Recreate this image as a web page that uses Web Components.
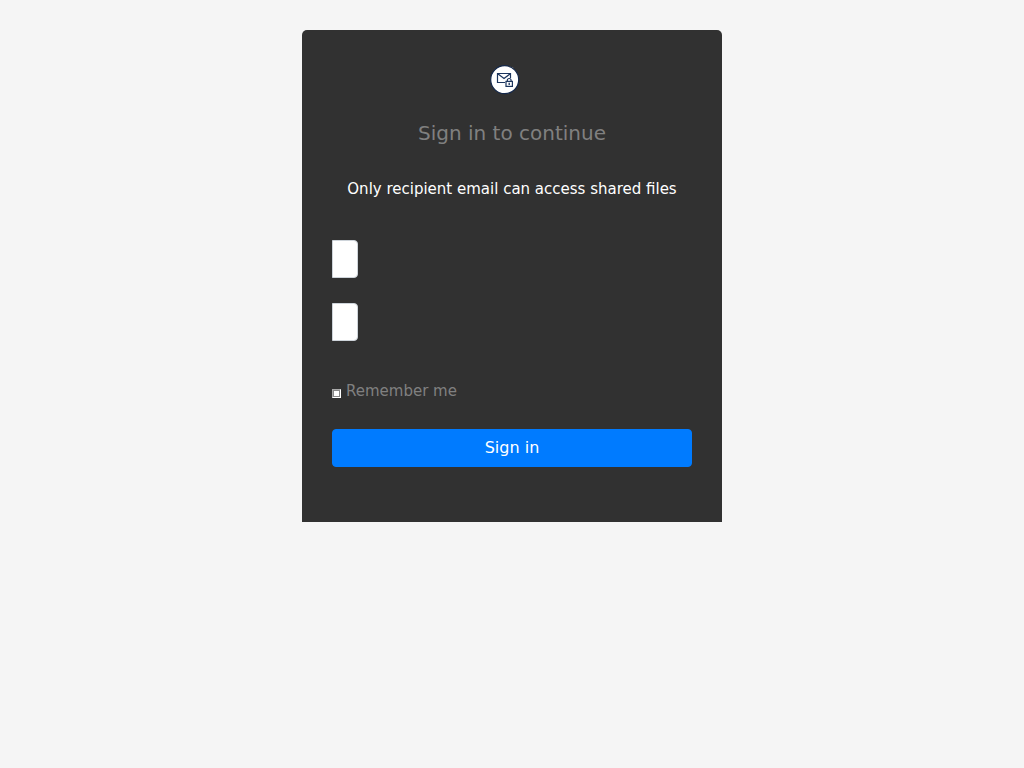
<!DOCTYPE html>
<html lang="en">
<head>
<meta charset="utf-8">
<meta name="viewport" content="width=device-width, initial-scale=1">
<title>Sign in</title>
<style>
body { margin: 0; background: #f5f5f5; font: 15px/24px "DejaVu Sans", sans-serif; color: #fff; }
</style>
</head>
<body>
<sign-in-card>
  <mail-logo slot="logo"></mail-logo>
  <span slot="heading">Sign in to continue</span>
  <span slot="note">Only recipient email can access shared files</span>
  <text-field type="email" label="Email"></text-field>
  <text-field type="password" label="Password"></text-field>
  <remember-option slot="actions">Remember me</remember-option>
  <submit-button slot="actions">Sign in</submit-button>
</sign-in-card>
<script>
function define(name, markup) {
  customElements.define(name, class extends HTMLElement {
    constructor() {
      super();
      this.attachShadow({ mode: 'open' }).innerHTML = markup;
    }
  });
}

define('mail-logo', `
  <style>
    :host { display: block; width: 30px; height: 30px; }
    svg { display: block; width: 100%; height: 100%; }
  </style>
  <svg viewBox="0 0 30 30" fill="none" role="img" aria-label="Secure mail">
    <circle cx="14.7" cy="14.7" r="14" fill="#fff" stroke="#14284b" stroke-width="1.2"/>
    <path d="M15 17.5H7.5V8.5H20.5V13M7.8 8.8L14 13.4L20.2 8.8" stroke="#1c355e" stroke-width="1.2"/>
    <path d="M17.3 16.3V15.4a1.9 1.9 0 0 1 3.8 0V16.3" stroke="#1c355e" stroke-width="1.2"/>
    <rect x="16" y="16.4" width="6.4" height="5" fill="#fff" stroke="#1c355e" stroke-width="1.2"/>
    <path d="M19.2 17.7v2.4" stroke="#1c355e" stroke-width="1.3"/>
  </svg>`);

define('remember-option', `
  <style>
    :host { display: block; color: #808080; }
    label { display: flex; align-items: center; gap: 5px; }
    input {
      appearance: none; box-sizing: border-box; width: 9px; height: 9px;
      margin: 5px 0 0; background: #fff; border: 1px solid;
      border-color: #aaa #fff #fff #aaa; box-shadow: inset 0 0 0 1px #888;
    }
    input:checked { background: #007bff; }
  </style>
  <label><input type="checkbox"><span><slot></slot></span></label>`);

define('submit-button', `
  <style>
    :host { display: block; }
    button {
      display: block; width: 100%; padding: 6px 12px; border: 1px solid #007bff;
      border-radius: 4px; background: #007bff; color: #fff; font: inherit; font-size: 16px;
    }
  </style>
  <button type="button"><slot></slot></button>`);

customElements.define('text-field', class extends HTMLElement {
  constructor() {
    super();
    this.attachShadow({ mode: 'open' }).innerHTML = `
      <style>
        :host { display: block; }
        input {
          display: block; box-sizing: border-box; width: 26px; height: 38px;
          padding: 6px 12px; border: 1px solid #ced4da; border-radius: 0 4px 4px 0;
          background: #fff; color: #495057; font: inherit;
        }
      </style>
      <input>`;
  }
  connectedCallback() {
    const input = this.shadowRoot.querySelector('input');
    input.type = this.getAttribute('type');
    input.setAttribute('aria-label', this.getAttribute('label'));
  }
});

define('sign-in-card', `
  <style>
    :host {
      display: block; box-sizing: border-box; max-width: 420px; margin: 30px auto;
      padding: 35px 30px 55px; border-radius: 5px 5px 0 0; background: #313131;
    }
    header { display: flex; flex-direction: column; align-items: center; text-align: center; }
    .logo { padding-right: 15px; }
    h1 { margin: 26px 0 32px; font-size: 20px; line-height: 24px; font-weight: 400; color: #808080; }
    p { margin: 0 0 39px; }
    .fields { display: grid; gap: 25px; margin-bottom: 38px; }
    .actions { display: grid; gap: 26px; }
  </style>
  <header>
    <div class="logo"><slot name="logo"></slot></div>
    <h1><slot name="heading"></slot></h1>
    <p><slot name="note"></slot></p>
  </header>
  <div class="fields"><slot></slot></div>
  <div class="actions"><slot name="actions"></slot></div>`);
</script>
</body>
</html>
